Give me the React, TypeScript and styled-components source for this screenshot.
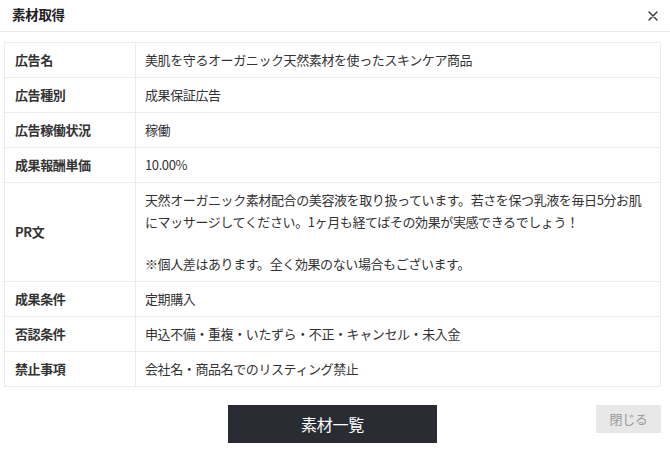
import React from "react";
import styled, { createGlobalStyle } from "styled-components";

const Global = createGlobalStyle`
  html, body { margin: 0; padding: 0; background: #fff; }
  body { font-family: "Noto Sans CJK JP", "Noto Sans", sans-serif; color: #333; }
`;

const Modal = styled.div`
  width: 670px;
  height: 472px;
  background: #fff;
  display: flex;
  flex-direction: column;
`;

const Header = styled.div`
  height: 32px;
  box-sizing: border-box;
  border-bottom: 1px solid #e9e9e9;
  display: flex;
  align-items: center;
  justify-content: space-between;
  padding: 0 12px 0 12px;
`;

const Title = styled.h1`
  margin: 0;
  font-size: 13.5px;
  font-weight: 700;
  letter-spacing: -0.3px;
  color: #222;
  line-height: 1;
  padding-bottom: 1px;
`;

const CloseX = styled.button`
  border: 0;
  background: none;
  padding: 0;
  width: 12px;
  height: 12px;
  display: flex;
  align-items: center;
  justify-content: center;
  margin-right: -1px;
  cursor: pointer;
`;

const Body = styled.div`
  padding: 10px 9px 0 4px;
`;

const Table = styled.table`
  width: 100%;
  border-collapse: collapse;
  table-layout: fixed;
  font-size: 13px;
  letter-spacing: -0.4px;
  line-height: 21.33px;
`;

const LabelCol = styled.col`
  width: 131px;
`;

const Label = styled.th`
  text-align: left;
  font-weight: 700;
  color: #333;
  border: 1px solid #ececec;
  padding: 6.33px 10px;
  vertical-align: middle;
`;

const Value = styled.td`
  color: #333;
  border: 1px solid #ececec;
  padding: 6.33px 8px 6.33px 9px;
  vertical-align: middle;
`;

const Footer = styled.div`
  display: grid;
  grid-template-columns: 1fr auto 1fr;
  align-items: start;
  padding: 18px 9px 0 4px;
`;

const PrimaryButton = styled.button`
  grid-column: 2;
  width: 209px;
  height: 38px;
  border: 0;
  background: #292c33;
  color: #fff;
  font-family: inherit;
  font-size: 16px;
  letter-spacing: -0.2px;
  cursor: pointer;
`;

const SecondaryButton = styled.button`
  grid-column: 3;
  justify-self: end;
  width: 65px;
  height: 28px;
  border: 0;
  background: #e8e8e8;
  color: #999;
  font-family: inherit;
  font-size: 13px;
  letter-spacing: -0.3px;
  cursor: pointer;
`;

const rows: { label: string; value: React.ReactNode }[] = [
  { label: "広告名", value: "美肌を守るオーガニック天然素材を使ったスキンケア商品" },
  { label: "広告種別", value: "成果保証広告" },
  { label: "広告稼働状況", value: "稼働" },
  { label: "成果報酬単価", value: "10.00%" },
  {
    label: "PR文",
    value: (
      <>
        天然オーガニック素材配合の美容液を取り扱っています。若さを保つ乳液を毎日5分お肌にマッサージしてください。1ヶ月も経てばその効果が実感できるでしょう！
        <br />
        <br />
        ※個人差はあります。全く効果のない場合もございます。
      </>
    ),
  },
  { label: "成果条件", value: "定期購入" },
  { label: "否認条件", value: "申込不備・重複・いたずら・不正・キャンセル・未入金" },
  { label: "禁止事項", value: "会社名・商品名でのリスティング禁止" },
];

export default function App() {
  return (
    <>
      <Global />
      <Modal>
        <Header>
          <Title>素材取得</Title>
          <CloseX aria-label="close">
            <svg width="10" height="10" viewBox="0 0 10 10">
              <path d="M1 1L9 9M9 1L1 9" stroke="#333" strokeWidth="1.4" strokeLinecap="round" />
            </svg>
          </CloseX>
        </Header>
        <Body>
          <Table>
            <colgroup>
              <LabelCol />
              <col />
            </colgroup>
            <tbody>
              {rows.map((r) => (
                <tr key={r.label}>
                  <Label>{r.label}</Label>
                  <Value>{r.value}</Value>
                </tr>
              ))}
            </tbody>
          </Table>
        </Body>
        <Footer>
          <PrimaryButton>素材一覧</PrimaryButton>
          <SecondaryButton>閉じる</SecondaryButton>
        </Footer>
      </Modal>
    </>
  );
}
